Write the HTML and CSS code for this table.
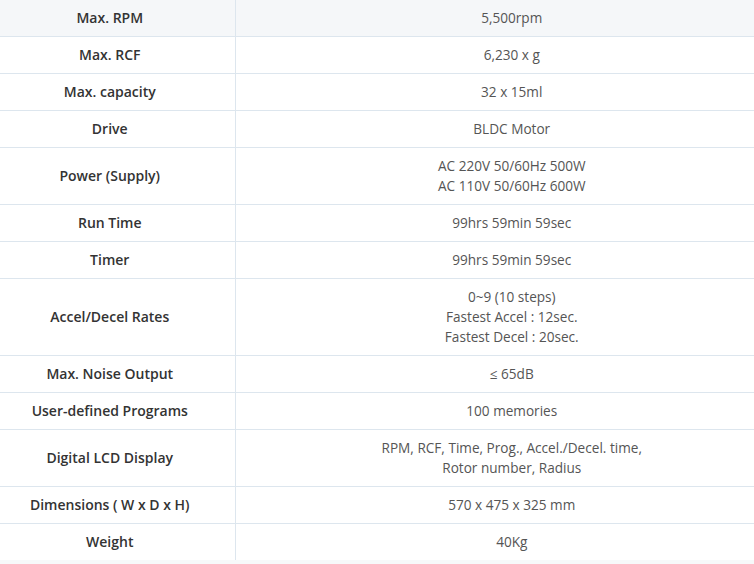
FILE: index.html
```html
<!DOCTYPE html>
<html>
<head>
<meta charset="utf-8">
<link rel="stylesheet" href="styles.css">
</head>
<body>
<div class="frame">
<table class="spec">
  <colgroup><col class="c-label"><col class="c-value"></colgroup>
  <tbody>
    <tr class="first"><th>Max. RPM</th><td>5,500rpm</td></tr>
    <tr><th>Max. RCF</th><td>6,230 x g</td></tr>
    <tr><th>Max. capacity</th><td>32 x 15ml</td></tr>
    <tr><th>Drive</th><td>BLDC Motor</td></tr>
    <tr><th>Power (Supply)</th><td>AC 220V 50/60Hz 500W<br>AC 110V 50/60Hz 600W</td></tr>
    <tr><th>Run Time</th><td>99hrs 59min 59sec</td></tr>
    <tr><th>Timer</th><td>99hrs 59min 59sec</td></tr>
    <tr><th>Accel/Decel Rates</th><td>0~9 (10 steps)<br>Fastest Accel : 12sec.<br>Fastest Decel : 20sec.</td></tr>
    <tr><th>Max. Noise Output</th><td>≤ 65dB</td></tr>
    <tr><th>User-defined Programs</th><td>100 memories</td></tr>
    <tr><th>Digital LCD Display</th><td>RPM, RCF, Time, Prog., Accel./Decel. time,<br>Rotor number, Radius</td></tr>
    <tr><th>Dimensions ( W x D x H)</th><td>570 x 475 x 325 mm</td></tr>
    <tr><th>Weight</th><td>40Kg</td></tr>
  </tbody>
</table>
</div>
</body>
</html>
```

FILE: styles.css
```css
html, body {
  margin: 0;
  padding: 0;
  background: #f7f9fa;
}
.frame {
  width: 754px;
  overflow: hidden;
}
.spec {
  width: 803px;
  margin-left: -15px;
  border-collapse: collapse;
  table-layout: fixed;
  background: #fff;
  font-family: "Open Sans", "Noto Sans", "Noto Sans CJK KR", sans-serif;
  line-height: 20px;
}
.c-label { width: 250px; }
.spec th, .spec td {
  padding: 8px 4px;
  text-align: center;
  vertical-align: middle;
  border-bottom: 1px solid #dde6ee;
}
.spec th {
  font-size: 14px;
  font-weight: 600;
  color: #333;
  border-right: 1px solid #dde6ee;
}
.spec td {
  font-size: 13.6px;
  font-weight: normal;
  color: #555;
}
.spec tr.first th, .spec tr.first td {
  background: #f5f7f9;
}
.spec tr:last-child th, .spec tr:last-child td {
  border-bottom: none;
}
```
